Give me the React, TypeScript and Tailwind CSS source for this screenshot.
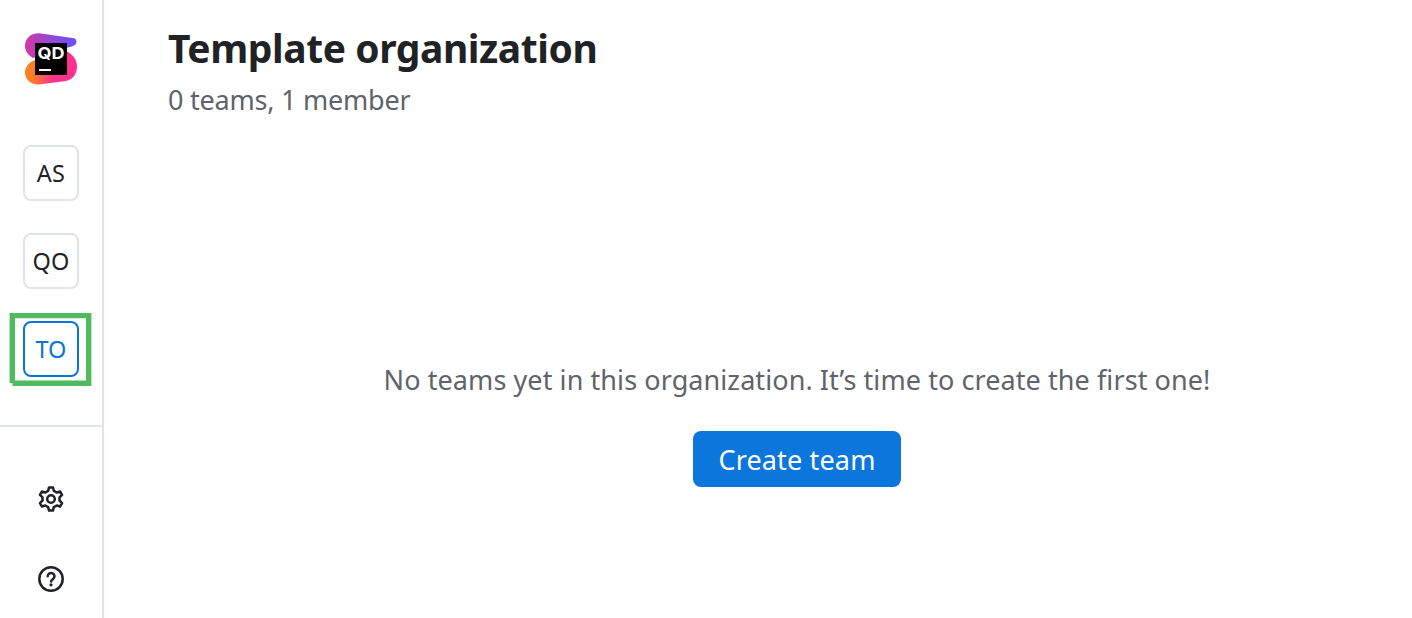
function Logo() {
  return (
    <svg width="52" height="52" viewBox="0 0 52 52" aria-label="Qodana">
      <defs>
        <linearGradient id="top" x1="0" y1="22" x2="52" y2="6" gradientUnits="userSpaceOnUse">
          <stop offset="0.1" stopColor="#d038aa" />
          <stop offset="0.55" stopColor="#9249d8" />
          <stop offset="1" stopColor="#6152ff" />
        </linearGradient>
        <linearGradient id="bottom" x1="0" y1="34" x2="52" y2="36" gradientUnits="userSpaceOnUse">
          <stop offset="0.15" stopColor="#ff7f22" />
          <stop offset="0.55" stopColor="#ff318c" />
          <stop offset="1" stopColor="#ff318c" />
        </linearGradient>
      </defs>
      <path d="M14 .3C6 0 0 5.500 0 13c0 5 3 9 8 12l24-8 15-3.500c3-1 4.500-2.500 4.500-4.700C51.500 6.500 50 5.200 47.500 5z" fill="url(#top)" />
      <path d="M42 18.500c6 3 10 8 10 15C52 42 47 47.500 39 48.300L13.500 51.500C6 52 0 46.500 0 39.500 0 34 4 29 10 27z" fill="url(#bottom)" />
      <path d="M10 10h32v32H10z" />
      <path d="M14 36h12v2H14z" fill="#fff" />
      <text x="12.600" y="26" textLength="27" lengthAdjust="spacingAndGlyphs" fill="#fff" className="font-[Inter,sans-serif] text-[16.500px] font-bold">QD</text>
    </svg>
  );
}

function GearIcon() {
  return (
    <svg width="26" height="26" viewBox="0 0 26 26" fill="none" stroke="#1f2326" strokeWidth="2.500">
      <path
        strokeLinejoin="round"
        d="M15 1.400L15.800 4.800L18.700 6.500L22.050 5.500L24.050 8.930L21.500 11.300V14.700L24.050 17.070L22.050 20.500L18.700 19.500L15.800 21.200L15 24.600H11L10.200 21.200L7.300 19.500L3.950 20.500L1.950 17.070L4.500 14.700V11.300L1.950 8.930L3.950 5.500L7.300 6.500L10.200 4.800L11 1.400Z"
      />
      <circle cx="13" cy="13" r="3.800" />
    </svg>
  );
}

function HelpIcon() {
  return (
    <svg width="26" height="26" viewBox="0 0 26 26" fill="none" stroke="#1f2326" strokeWidth="2.500">
      <circle cx="13" cy="13" r="11.700" />
      <path d="M9.700 10.300a3.400 3.300 0 1 1 5.400 2.600c-1.300.9-2 1.400-2 2.700" strokeLinecap="round" />
      <circle cx="13" cy="18.800" r="1.600" fill="#1f2326" stroke="none" />
    </svg>
  );
}

const tile = "flex size-14 items-center justify-center rounded-lg border-2 bg-white pt-px text-[23.500px]";

export default function App() {
  return (
    <div className="flex h-[618px] w-[1412px] overflow-hidden bg-white font-['Noto_Sans',sans-serif] text-[#1f2326]">
      <aside className="flex w-[104px] shrink-0 flex-col border-r-2 border-[#dfe3ea]">
        <div className="flex h-[425px] flex-col items-center pt-[33px]">
          <Logo />
          <nav className="mt-[60px] flex flex-col gap-8">
            <button className={`${tile} border-[#dfe3ea]`}><span className="tracking-[0.400px]">AS</span></button>
            <button className={`${tile} border-[#dfe3ea]`}><span className="tracking-[0.200px]">QO</span></button>
            <div className="relative">
              <svg className="absolute -top-[9px] -left-[14px]" width="84" height="75" fill="none">
                <path d="M3.300 71V3.600H79.700V71.300H3.500" stroke="#4fbb5e" strokeWidth="5.400" />
              </svg>
              <button className={`${tile} relative border-[#0b74da] text-[#0b74da]`}><span>TO</span></button>
            </div>
          </nav>
        </div>
        <div className="flex flex-col items-center border-t-2 border-[#dfe3ea] pt-[59px]">
          <button><GearIcon /></button>
          <button className="mt-[54px]"><HelpIcon /></button>
        </div>
      </aside>
      <main className="flex flex-1 flex-col">
        <h1 className="mt-5 pl-16 text-[39px] leading-[55px] font-bold whitespace-nowrap"><span className="tracking-[-0.430px]">Template organization</span></h1>
        <p className="mt-[5px] pl-16 text-[27px] leading-10 whitespace-nowrap text-[#5f636b]"><span className="tracking-[-0.220px]">0 teams, 1 member</span></p>
        <section className="mt-60 flex w-[1386px] flex-col items-center self-start">
          <p className="text-[27px] leading-10 whitespace-nowrap text-[#5f636b]"><span className="tracking-[0.080px]">No teams yet in this organization. It’s time to create the first one!</span></p>
          <button className="mt-[31px] h-14 w-52 rounded-lg bg-[#0b76dc] pt-0.5 text-[27px] text-white"><span className="tracking-[0.150px]">Create team</span></button>
        </section>
      </main>
    </div>
  );
}
